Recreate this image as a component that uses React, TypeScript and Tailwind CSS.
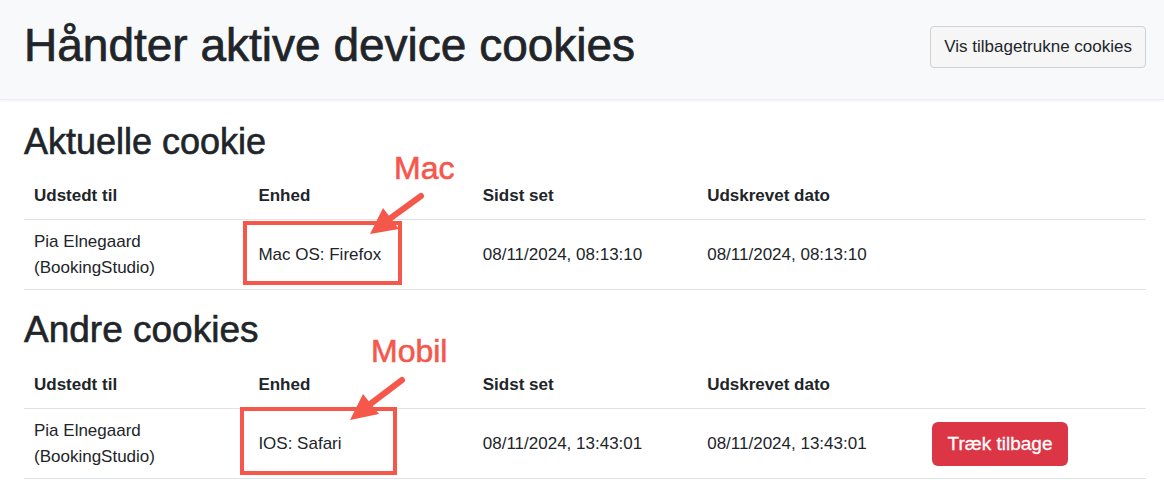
import React from 'react'

type Row = {
  name: string[]
  device: string
  seen: string
  printed: string
  revoke?: boolean
}

const current: Row[] = [
  {
    name: ['Pia Elnegaard', '(BookingStudio)'],
    device: 'Mac OS: Firefox',
    seen: '08/11/2024, 08:13:10',
    printed: '08/11/2024, 08:13:10',
  },
]

const others: Row[] = [
  {
    name: ['Pia Elnegaard', '(BookingStudio)'],
    device: 'IOS: Safari',
    seen: '08/11/2024, 13:43:01',
    printed: '08/11/2024, 13:43:01',
    revoke: true,
  },
]

function CookieTable({ rows }: { rows: Row[] }) {
  return (
    <table className="w-full table-fixed border-collapse text-[17px] leading-[26px]">
      <thead>
        <tr className="border-b border-[#dee2e6]">
          <th className="px-[10px] py-[10px] text-left font-bold">Udstedt til</th>
          <th className="px-[10px] py-[10px] text-left font-bold">Enhed</th>
          <th className="px-[10px] py-[10px] text-left font-bold">Sidst set</th>
          <th className="px-[10px] py-[10px] text-left font-bold">Udskrevet dato</th>
          <th className="px-[10px] py-[10px]"></th>
        </tr>
      </thead>
      <tbody>
        {rows.map((r, i) => (
          <tr key={i} className="border-b border-[#dee2e6]">
            <td className="px-[10px] pt-[9px] pb-[8px] align-middle">
              {r.name.map((n) => (
                <div key={n}>{n}</div>
              ))}
            </td>
            <td className="px-[10px] pt-[9px] pb-[8px] align-middle">{r.device}</td>
            <td className="px-[10px] pt-[9px] pb-[8px] align-middle">{r.seen}</td>
            <td className="px-[10px] pt-[9px] pb-[8px] align-middle">{r.printed}</td>
            <td className="px-[10px] pt-[9px] pb-[8px] align-middle">
              {r.revoke && (
                <button className="h-[44px] rounded-[6px] bg-[#dc3545] px-[16px] text-[19px] text-white [-webkit-text-stroke:0.3px_#fff]">
                  Træk tilbage
                </button>
              )}
            </td>
          </tr>
        ))}
      </tbody>
    </table>
  )
}

// annotations drawn on top of the screenshot
function Annotations() {
  const red = '#f5574b'
  return (
    <>
      <svg className="pointer-events-none absolute left-0 top-0" width={1164} height={491}>
        <rect x={245} y={223} width={155} height={60} fill="none" stroke={red} strokeWidth={4} />
        <rect x={242} y={409} width={153} height={64} fill="none" stroke={red} strokeWidth={4} />
        <line x1={421} y1={196} x2={388} y2={220} stroke={red} strokeWidth={6} strokeLinecap="round" />
        <polygon points="370,234 399,229 383,208" fill={red} />
        <line x1={402} y1={380} x2={369} y2={405} stroke={red} strokeWidth={6} strokeLinecap="round" />
        <polygon points="350,420 379,414 363,394" fill={red} />
      </svg>
      <div className="pointer-events-none absolute left-[394px] top-[149px] text-[32px] leading-[38px] text-[#f5574b] [-webkit-text-stroke:0.6px_#f5574b] [text-shadow:0_0_2px_#fff,0_0_3px_#fff]">
        Mac
      </div>
      <div className="pointer-events-none absolute left-[371px] top-[332px] text-[32px] leading-[38px] text-[#f5574b] [-webkit-text-stroke:0.6px_#f5574b] [text-shadow:0_0_2px_#fff,0_0_3px_#fff]">
        Mobil
      </div>
    </>
  )
}

export default function App() {
  return (
    <div className="relative h-[491px] w-[1164px] overflow-hidden bg-white font-['Liberation_Sans',Arial,sans-serif] text-[#212529]">
      <header className="flex h-[100px] items-start justify-between border-b border-[#eceef1] bg-[#f8f9fa] pl-6 pr-[18px] shadow-[0_1px_3px_rgba(0,0,0,0.06)]">
        <h1 className="mt-[18px] text-[46px] leading-[55px] [-webkit-text-stroke:0.7px_#212529]">
          Håndter aktive device cookies
        </h1>
        <button className="mt-[26px] h-[42px] rounded-[4px] border border-[#cfd1d4] bg-[#f6f6f7] px-[13px] text-[17px] text-[#212529]">
          Vis tilbagetrukne cookies
        </button>
      </header>

      <main className="pl-6 pr-[18px]">
        <h2 className="mt-[20px] mb-[10px] text-[36px] leading-[43px] [-webkit-text-stroke:0.6px_#212529]">
          Aktuelle cookie
        </h2>
        <CookieTable rows={current} />

        <h2 className="mt-[18px] mb-[10px] text-[37px] leading-[44px] [-webkit-text-stroke:0.6px_#212529]">
          Andre cookies
        </h2>
        <CookieTable rows={others} />
      </main>

      <Annotations />
    </div>
  )
}
